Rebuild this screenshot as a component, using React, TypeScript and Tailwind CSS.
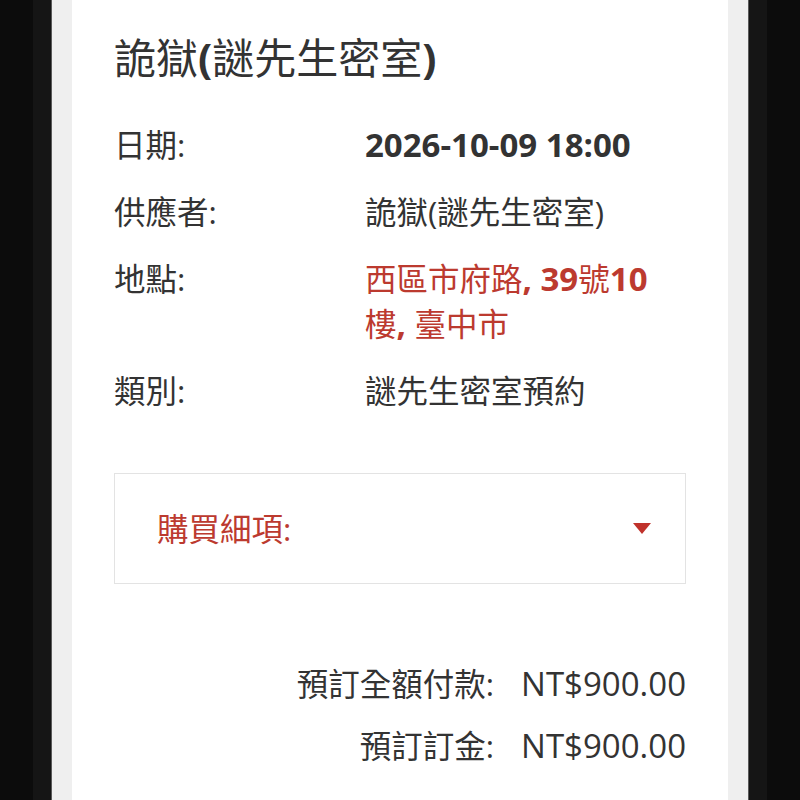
import React from "react";

// latin runs render a touch wider than the CJK text around them
const Latin = ({ children }: { children: React.ReactNode }) => (
  <span className="text-[33px]">{children}</span>
);

const rows = [
  {
    label: "日期:",
    value: (
      <span className="font-bold">
        <Latin>2026-10-09 18:00</Latin>
      </span>
    ),
  },
  { label: "供應者:", value: <span>詭獄(謎先生密室)</span> },
  {
    label: "地點:",
    value: (
      <span className="font-bold text-[#bc3a2f]">
        <span className="font-normal">西區市府路</span>
        <Latin>, 39</Latin>
        <span className="font-normal">號</span>
        <Latin>10</Latin>
        <span className="font-normal">樓</span>
        <Latin>, </Latin>
        <span className="font-normal">臺中市</span>
      </span>
    ),
  },
  { label: "類別:", value: <span>謎先生密室預約</span> },
];

const App = () => {
  return (
    <div className="min-h-screen h-[800px] overflow-hidden bg-[#0c0c0c] px-[33px] font-['Open_Sans','Noto_Sans_CJK_TC',sans-serif] text-[#333]">
      <div className="h-full bg-[#151515] px-[18px]">
        <div className="h-full border-x border-[#5a5a5a] bg-[#efefef] px-[20px]">
          <div className="h-full bg-white px-[42px] pt-[31px]">
            {/* title */}
            <h1 className="text-[42px] leading-[54px] font-bold">
              <span className="font-normal">詭獄</span>(
              <span className="font-normal">謎先生密室</span>)
            </h1>

            {/* details */}
            <div className="mt-[37px] flex flex-col gap-[22px] text-[31.5px] leading-[45px]">
              {rows.map((r) => (
                <div key={r.label} className="flex">
                  <div className="w-[251px] shrink-0">{r.label}</div>
                  <div className="w-[320px]">{r.value}</div>
                </div>
              ))}
            </div>

            {/* purchase details accordion */}
            <div className="mt-[60px] h-[111px] border border-[#e3e3e3] flex items-center justify-between pl-[42px] pr-[34px]">
              <span className="text-[31.5px] leading-[45px] text-[#bc3a2f]">購買細項:</span>
              <svg width="18" height="11" viewBox="0 0 18 11">
                <path d="M0 0h18L9 11z" fill="#c0322b" />
              </svg>
            </div>

            {/* totals */}
            <div className="mt-[77px] flex flex-col items-end gap-[17px] text-[31.5px] leading-[45px]">
              <div className="flex gap-[27px]">
                <span>預訂全額付款:</span>
                <Latin>NT$900.00</Latin>
              </div>
              <div className="flex gap-[27px]">
                <span>預訂訂金:</span>
                <Latin>NT$900.00</Latin>
              </div>
            </div>
          </div>
        </div>
      </div>
    </div>
  );
};

export default App;
